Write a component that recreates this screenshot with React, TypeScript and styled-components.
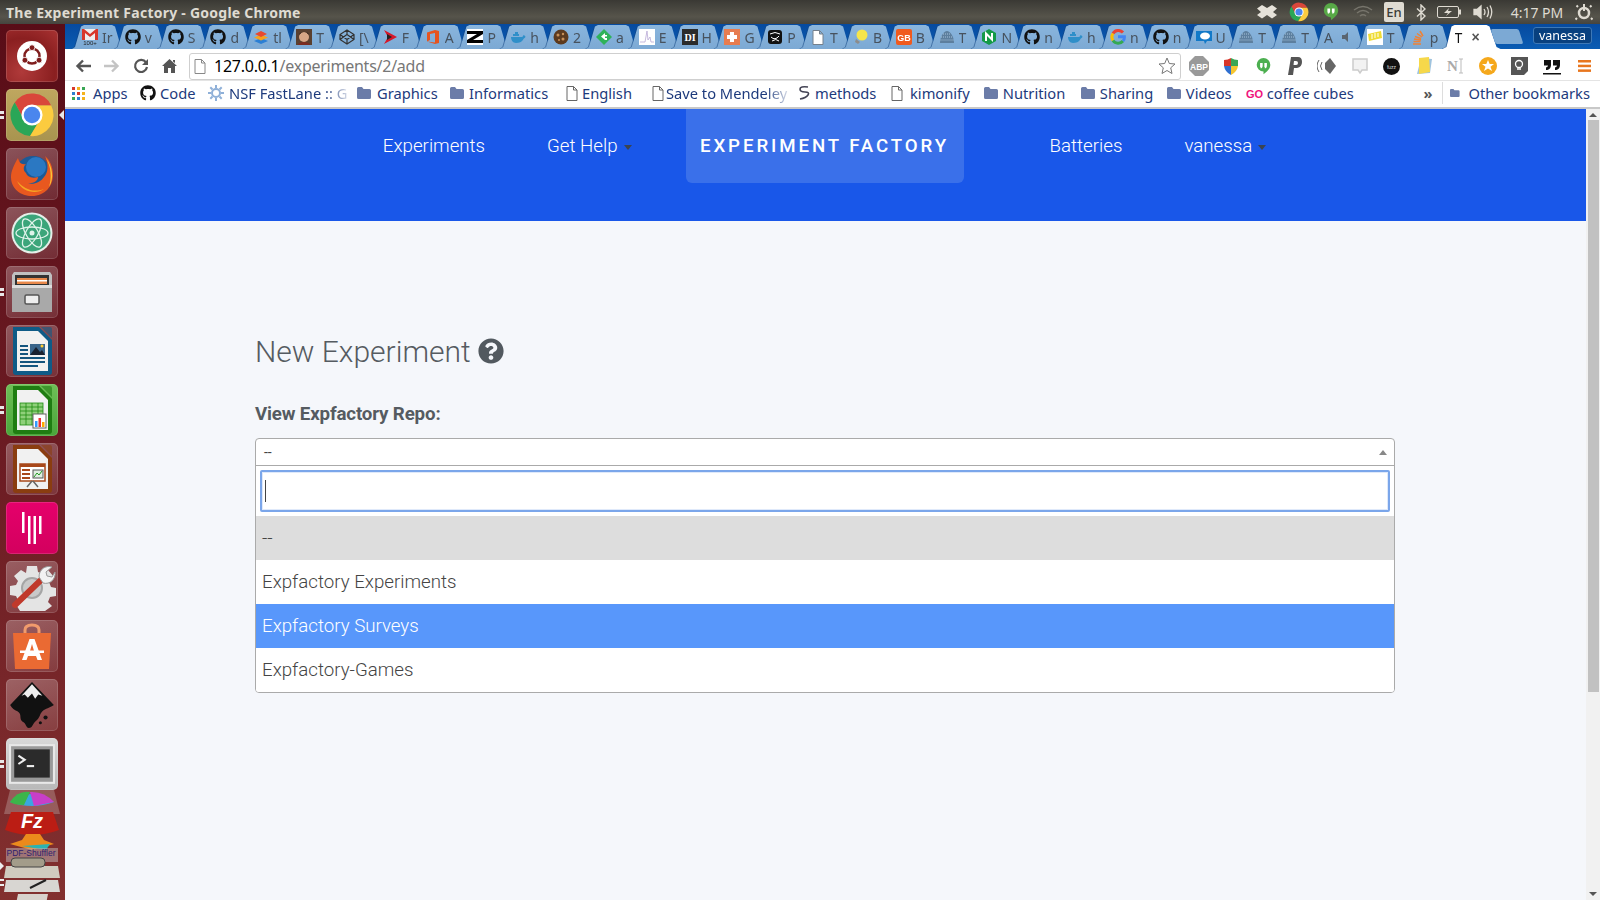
import React from "react";
import styled, { createGlobalStyle } from "styled-components";
import { FaGithub, FaQuestionCircle } from "react-icons/fa";

const Global = createGlobalStyle`
  html, body { margin: 0; padding: 0; height: 100%; overflow: hidden; background: #f5f7fb; }
  #root { height: 100%; }
  * { box-sizing: border-box; }
`;

const Screen = styled.div`
  width: 1600px; height: 900px; overflow: hidden;
  display: flex; flex-direction: column;
  font-family: Roboto, "Liberation Sans", sans-serif;
`;
const TitleBar = styled.header`
  height: 24px; flex: none; display: flex; align-items: center;
  background: linear-gradient(#3a3934, #56544b 70%, #45443e);
  color: #dfdbd2; padding: 0 3px 0 6px;
`;
const TitleText = styled.div`
  font: 700 14px "Noto Sans", "Open Sans", sans-serif; flex: 1; letter-spacing: .25px; white-space: nowrap;
`;
const Indicator = styled.span<{ $w: number }>`
  width: ${p => p.$w}px; flex: none; display: flex; justify-content: center; align-items: center;
  color: #dfdbd2;
`;
const ClockText = styled.span`
  font: 400 14px "Noto Sans", sans-serif; width: 60px; flex: none; text-align: center; color: #dfdbd2; margin-left: 6px; margin-right: 4px;
`;
const LangBox = styled.span`
  background: #dfdbd2; color: #3c3b37; font: 500 13px "Noto Sans", sans-serif; width: 20px; height: 20px;
  display: flex; align-items: center; justify-content: center; border-radius: 2px;
`;
const Body = styled.div`flex: 1; min-height: 0; display: flex;`;
const Launcher = styled.nav`
  width: 65px; flex: none; display: flex; flex-direction: column; gap: 7px; padding-top: 6px;
  background: linear-gradient(#590d17, #6a1a22 45%, #82302f);
  position: relative; overflow: hidden;
`;
const Tile = styled.div<{ $bg?: string }>`
  width: 52px; height: 52px; margin-left: 6px; flex: none; border-radius: 5px; position: relative;
  background: ${p => p.$bg || "linear-gradient(160deg, rgba(255,255,255,.28), rgba(255,255,255,.1))"};
  box-shadow: inset 0 0 0 1px rgba(255,255,255,.14);
  display: flex; align-items: center; justify-content: center;
`;
const Pips = styled.span`
  position: absolute; left: -6px; top: 50%; transform: translateY(-50%);
  display: flex; flex-direction: column; gap: 2px;
  &::before, &::after { content: ""; width: 4px; height: 3px; background: #e8e8e8; }
`;
const Active = styled.span`
  position: absolute; right: -6px; top: 50%; transform: translateY(-50%);
  border: 5px solid transparent; border-left: 0; border-right: 5px solid #e8e8e8;
`;
const Stack = styled.svg`display: block; margin-top: -7px; flex: none;`;
const Main = styled.div`flex: 1; min-width: 0; display: flex; flex-direction: column;`;
const TabStrip = styled.div`
  height: 25px; flex: none; display: flex; align-items: flex-end; padding-left: 7px; position: relative;
  background: linear-gradient(#064a9f, #0a5cb3);
`;
const TabSlot = styled.div`
  width: 42.84px; flex: none; height: 24px; filter: drop-shadow(-1px 0 0 rgba(20,70,130,.55));
`;
const TabShape = styled.div<{ $active?: boolean }>`
  width: ${p => (p.$active ? 58 : 52)}px; height: 24px; display: flex; align-items: center; gap: 4px;
  padding-left: ${p => (p.$active ? 12 : 10)}px; overflow: hidden;
  clip-path: ${p => p.$active
    ? "polygon(0 100%, 4px 92%, 9px 6%, 12px 0, 44px 0, 47px 6%, 54px 92%, 58px 100%)"
    : "polygon(0 100%, 3px 92%, 9px 6%, 12px 0, 40px 0, 43px 6%, 49px 92%, 52px 100%)"};
  background: ${p => (p.$active ? "#fff" : "linear-gradient(#8ab5dd, #7ca9d4)")};
  font: 400 14px "Noto Sans", sans-serif; color: #47525e; white-space: nowrap;
`;
const TabIcon = styled.span`width: 16px; height: 16px; flex: none; display: flex; align-items: center; justify-content: center; color: #111;`;
const TabLabel = styled.span<{ $active?: boolean }>`
  width: ${p => (p.$active ? 10 : 14)}px; overflow: hidden; flex: none; color: ${p => (p.$active ? "#111" : "#47525e")};
`;
const CloseMark = styled.span`color: #555; font: 700 14px "Liberation Sans", sans-serif; margin-left: 3px;`;
const NewTab = styled.div`
  width: 28px; height: 15px; margin-left: 8px; margin-bottom: 5px; flex: none; transform: skewX(18deg);
  background: #7ca9d4; border-radius: 2px;
`;
const Profile = styled.div`
  position: absolute; right: 8px; top: 3px; width: 59px; height: 17px; border-radius: 3px;
  background: #08407f; border: 1px solid #3d78b6; color: #fff; font: 400 12.5px "Noto Sans", sans-serif;
  display: flex; align-items: center; justify-content: center;
`;
const Toolbar = styled.div`
  height: 32px; flex: none; display: flex; align-items: center; background: #fff; border-bottom: 1px solid #e4e4e4;
  padding: 3px 0 0 3px;
`;
const NavBtn = styled.span`width: 29px; flex: none; display: flex; align-items: center; justify-content: center;`;
const Omnibox = styled.div`
  width: 992px; height: 27px; margin-left: 5px; margin-right: 2px; flex: none; display: flex; align-items: center; gap: 8px; padding: 0 4px;
  border: 1px solid #cfcfcf; border-radius: 3px; background: #fff;
`;
const Url = styled.div`flex: 1; font: 400 16px "Noto Sans", sans-serif; color: #777; white-space: nowrap; letter-spacing: -.25px;`;
const Host = styled.span`color: #000;`;
const ExtBtn = styled.span`width: 32.1px; flex: none; display: flex; align-items: center; justify-content: center;`;
const Bookmarks = styled.div`
  height: 28px; flex: none; display: flex; align-items: center; background: #fff; border-bottom: 2px solid #c8c8c8;
  font: 400 14.7px "Noto Sans", sans-serif; color: #1d3a7c; padding: 0 0 2px 7px; white-space: nowrap; overflow: hidden;
`;
const Bookmark = styled.span<{ $w: number; $gap?: number; $fade?: boolean }>`
  width: ${p => p.$w}px; flex: none; display: flex; align-items: center; gap: ${p => p.$gap ?? 7}px; overflow: hidden;
  ${p => p.$fade ? "mask-image: linear-gradient(90deg, #000 78%, transparent 97%);" : ""}
`;
const Chevrons = styled.span`width: 28px; flex: none; color: #555; font-weight: 700; text-align: center;`;
const BarDivider = styled.span`width: 1px; height: 22px; background: #ddd; margin: 0 7px 0 0; flex: none;`;
const Viewport = styled.div`flex: 1; min-height: 0; display: flex; background: #f5f7fb;`;
const Page = styled.main`flex: 1; min-width: 0; display: flex; flex-direction: column;`;
const NavBar = styled.div`
  height: 112px; flex: none; background: #1957e9; display: flex; justify-content: center; align-items: flex-start;
  padding-right: 2px; font: 300 18.7px Roboto, sans-serif; color: #fff;
`;
const NavItem = styled.a<{ $right: number }>`
  height: 74px; display: flex; align-items: center; gap: 6px; margin-right: ${p => p.$right}px; white-space: nowrap;
`;
const Caret = styled.i`
  width: 0; height: 0; border: 4.5px solid transparent; border-bottom: 0; border-top: 5px solid #3b4450; margin-top: 2px;
`;
const Brand = styled.a`
  width: 278px; height: 74px; margin-right: 86px; background: #3a70ea; border-radius: 0 0 6px 6px;
  display: flex; align-items: center; justify-content: center;
  font: 500 18.7px Roboto, sans-serif; letter-spacing: 2.9px; white-space: nowrap;
`;
const Content = styled.section`padding: 104px 191px 0 190px;`;
const Heading = styled.h1`
  margin: 0; display: flex; align-items: center; gap: 7px; height: 52px;
  font: 300 30px Roboto, sans-serif; color: #555b61;
`;
const FieldLabel = styled.label`
  display: block; margin-top: 26px; font: 700 18.7px Roboto, sans-serif; color: #555b61; letter-spacing: -.15px; line-height: 22px;
`;
const SelectBox = styled.div`
  margin-top: 13px; background: #fff; border: 1px solid #aaa; border-radius: 4px; overflow: hidden;
`;
const SelectHead = styled.div`
  height: 27px; padding: 0 7px 0 8px; display: flex; align-items: center; justify-content: space-between;
  border-bottom: 1px solid #aaa; font: 400 14px Roboto, sans-serif; color: #444;
`;
const CaretUp = styled.i`
  width: 0; height: 0; border: 4px solid transparent; border-top: 0; border-bottom: 5px solid #888; margin-right: 0;
`;
const SearchWrap = styled.div`padding: 4px;`;
const SearchBox = styled.div`
  height: 42px; border: 2px solid #7ba6ea; border-radius: 2px; display: flex; align-items: center; padding-left: 3px;
  box-shadow: inset 0 0 0 1px #dfe9fa;
`;
const TextCaret = styled.span`width: 1px; height: 22px; background: #444;`;
const Option = styled.div<{ $state?: "selected" | "hover" }>`
  height: 44px; padding-left: 6px; display: flex; align-items: center;
  font: 300 18.7px Roboto, sans-serif;
  background: ${p => (p.$state === "selected" ? "#ddd" : p.$state === "hover" ? "#5897fb" : "#fff")};
  color: ${p => (p.$state === "hover" ? "#fff" : "#444")};
`;
const Scrollbar = styled.aside`
  width: 14px; flex: none; background: #f1f1f1; display: flex; flex-direction: column; align-items: center;
  padding: 4px 0; justify-content: flex-start;
`;
const ArrowUp = styled.i`width: 0; height: 0; border: 4px solid transparent; border-top: 0; border-bottom: 4px solid #555; flex: none;`;
const ArrowDown = styled.i`width: 0; height: 0; border: 4px solid transparent; border-bottom: 0; border-top: 4px solid #555; flex: none; margin-top: auto;`;
const Thumb = styled.div`width: 11px; height: 572px; margin-top: 3px; background: #c1c1c1; flex: none;`;

/* ---------- small drawings ---------- */
const ChromeLogo = ({ s = 16 }: { s?: number }) => (
  <svg width={s} height={s} viewBox="0 0 48 48">
    <path d="M24 14H44A22 22 0 0 0 6 11L15 28Z" fill="#d9463a" />
    <path d="M6 11A22 22 0 0 0 22 46L31 31 15 28Z" fill="#2aa657" />
    <path d="M44 14A22 22 0 0 1 22 46L33 28 24 14Z" fill="#fbcb3f" />
    <circle cx="24" cy="24" r="11" fill="#fff" />
    <circle cx="24" cy="24" r="8.6" fill="#4a86ee" />
  </svg>
);
const Folder = () => (
  <svg width="14" height="12" viewBox="0 0 14 12"><path d="M0 1.5Q0 0 1.5 0H5L6.5 2H12.5Q14 2 14 3.5V10.5Q14 12 12.5 12H1.5Q0 12 0 10.5Z" fill="#6b7ca8" /></svg>
);
const Doc = ({ c = "#666" }: { c?: string }) => (
  <svg width="12" height="15" viewBox="0 0 12 15"><path d="M1 .5H7.5L11 4V14.5H1ZM7.5 .5V4H11" fill="#fff" stroke={c} /></svg>
);
const Hangouts = ({ c = "#4caf50", s = 18 }: { c?: string; s?: number }) => (
  <svg width={s} height={s} viewBox="0 0 18 20">
    <path d="M9 0A8 8 0 0 1 17 8C17 13 13 16 9 19V16A8 8 0 0 1 9 0Z" fill={c} />
    <path d="M5 6H8V9C8 11 7 12 5.5 12V10.5H5ZM10 6H13V9C13 11 12 12 10.5 12V10.5H10Z" fill="#fff" />
  </svg>
);
const Pile = () => (
  <svg width="16" height="16" viewBox="0 0 16 16">
    <path d="M1 14C1 7 5 2 8 2S15 7 15 14Z" fill="#5d7f9e" />
    <path d="M2 8H14M1.5 11H14.5M4 5H12" stroke="#a8c4dc" strokeDasharray="1 1" />
  </svg>
);
const favicons: Record<string, React.ReactNode> = {
  gmail: (
    <svg width="16" height="16" viewBox="0 0 16 16">
      <rect y="0" width="16" height="11" fill="#eee" />
      <path d="M0 0H2L8 5 14 0H16V11H13V4L8 8 3 4V11H0Z" fill="#d8372b" />
      <text x="8" y="16" fontSize="6" textAnchor="middle" fontFamily="Liberation Sans" fill="#222">100+</text>
    </svg>
  ),
  gh: <FaGithub size={16} />,
  stack: (
    <svg width="16" height="16" viewBox="0 0 16 16">
      <path d="M8 9 1 12 8 15 15 12Z" fill="#2b7fd4" /><path d="M8 5.500 1 8.500 8 11.500 15 8.500Z" fill="#f6a21e" />
      <path d="M8 2 2 5 8 8 14 5Z" fill="#e8492f" />
    </svg>
  ),
  face: (
    <svg width="16" height="16" viewBox="0 0 16 16">
      <rect width="16" height="16" fill="#5a4030" /><circle cx="8" cy="8" r="5" fill="#d8a686" />
      <path d="M2 16C2 12 14 12 14 16Z" fill="#7a2c22" /><path d="M3 6Q8 0 13 6L12 4Q8 2 4 4Z" fill="#2a1a12" />
    </svg>
  ),
  codepen: (
    <svg width="16" height="16" viewBox="0 0 16 16" fill="none" stroke="#333" strokeWidth="1.2">
      <path d="M8 1 15 5.500V10.500L8 15 1 10.500V5.500ZM8 1V5.500M8 10.500V15M1 5.500 8 10.500 15 5.500M1 10.500 8 5.500 15 10.500" />
    </svg>
  ),
  red: <svg width="16" height="16" viewBox="0 0 16 16"><path d="M2 1 15 8 2 15 6 8Z" fill="#d6182a" /><path d="M5 5 10 8 5 11Z" fill="#222" /></svg>,
  office: <svg width="16" height="16" viewBox="0 0 16 16"><path d="M2 3.500 10 1 14 2V14L10 15 2 12.500 10 13.500V4L5 5V11L2 12.500Z" fill="#e6541f" /></svg>,
  z: <svg width="16" height="16" viewBox="0 0 16 16"><rect width="16" height="16" fill="#fff" /><path d="M0 2H16V5L6 11H16V14H0V11L10 5H0Z" fill="#000" /></svg>,
  docker: (
    <svg width="16" height="16" viewBox="0 0 16 16"><path d="M1 8H12C13 8 13 6 14 6 15 7 15.500 7.500 15.500 8 14.500 9 14 9.500 13.500 10 12 13 9 14 6 14 3 14 1 11 1 8Z" fill="#2f8fc9" /><path d="M3 7V5H9V7M5 5V3H8V5" fill="#2f8fc9" /></svg>
  ),
  cookie: <svg width="16" height="16" viewBox="0 0 16 16"><circle cx="8" cy="8" r="7.500" fill="#5c3a1e" /><circle cx="5" cy="6" r="1.500" fill="#c89058" /><circle cx="10" cy="5" r="1.200" fill="#c89058" /><circle cx="10" cy="10" r="1.500" fill="#c89058" /><circle cx="6" cy="11" r="1" fill="#c89058" /></svg>,
  diamond: <svg width="16" height="16" viewBox="0 0 16 16"><path d="M8 0 16 8 8 16 0 8Z" fill="#2eb25a" /><path d="M5 7.500 9 4V6H11V7.500H9V9H11V11H9Z" fill="#fff" /></svg>,
  chart: <svg width="16" height="16" viewBox="0 0 16 16"><rect width="16" height="16" fill="#fff" /><path d="M1 13H6L8 2 9 11 11 8 12 13H15" fill="none" stroke="#b9a9d6" strokeWidth=".8" /></svg>,
  di: (
    <svg width="16" height="16" viewBox="0 0 16 16"><rect width="16" height="16" fill="#2b2b2b" /><text x="8" y="12" fontSize="10" fontWeight="700" fontFamily="Liberation Serif" textAnchor="middle" fill="#fff">DI</text></svg>
  ),
  plus: <svg width="16" height="16" viewBox="0 0 16 16"><rect width="16" height="16" fill="#e77c50" /><path d="M6 3H10V6H13V10H10V13H6V10H3V6H6Z" fill="#fff" /></svg>,
  dark: (
    <svg width="16" height="16" viewBox="0 0 16 16"><rect x="1" y="1" width="14" height="14" rx="3" fill="#111" /><path d="M3 5Q8 2 13 5M4 8Q8 12 12 7M5 12Q9 9 12 12" stroke="#fff" fill="none" /></svg>
  ),
  doc: <Doc c="#75808c" />,
  bulb: <svg width="16" height="16" viewBox="0 0 16 16"><circle cx="9" cy="6" r="5.500" fill="#f5e54a" /><path d="M3 10 7 13 5 15 2 13Z" fill="#8c8c8c" /></svg>,
  gb: (
    <svg width="16" height="16" viewBox="0 0 16 16"><rect width="16" height="16" rx="2" fill="#f05a1e" /><text x="8" y="12" fontSize="9" fontWeight="700" fontFamily="Liberation Sans" textAnchor="middle" fill="#fff">GB</text></svg>
  ),
  pile: <Pile />,
  nginx: <svg width="16" height="16" viewBox="0 0 16 16"><path d="M8 0 15 4V12L8 16 1 12V4Z" fill="#149a46" /><path d="M5 12V4.500L11 10.500V4" stroke="#fff" strokeWidth="2" fill="none" /></svg>,
  g: (
    <svg width="16" height="16" viewBox="0 0 16 16" fill="none" strokeWidth="3">
      <path d="M13 3.500A6.300 6.300 0 0 0 3 4.500" stroke="#ea4335" /><path d="M3 4.500A6.300 6.300 0 0 0 3 11.500" stroke="#fbbc05" />
      <path d="M3 11.500A6.300 6.300 0 0 0 13 12" stroke="#34a853" /><path d="M13 12Q14.500 10.500 14.400 7.800H8" stroke="#4285f4" />
    </svg>
  ),
  blue: <svg width="16" height="16" viewBox="0 0 16 16"><path d="M0 2H16V12H11L9 15 8 12H0Z" fill="#1279c8" /><ellipse cx="9" cy="7" rx="5" ry="3.500" fill="#fff" /></svg>,
  yellow: <svg width="16" height="16" viewBox="0 0 16 16"><rect width="16" height="16" fill="#fff" /><path d="M1 5 14 2 15 9 2 12Z" fill="#efdc34" /><path d="M5 5V10M8 4V9M11 4V8" stroke="#fff" /></svg>,
  so: <svg width="16" height="16" viewBox="0 0 16 16" fill="none" stroke="#ef8236" strokeWidth="1.500"><path d="M3 15H11M3.500 12.500H10.500M4 10 11 11M5 7.500 11 9.500M7 4.500 12 8M10 2 13 7" /></svg>,
};
const tabs: [string | null, string][] = [
  ["gmail", "Ir"], ["gh", "v"], ["gh", "S"], ["gh", "d"], ["stack", "tl"], ["face", "T"], ["codepen", "[\\"], ["red", "F"],
  ["office", "A"], ["z", "P"], ["docker", "h"], ["cookie", "2"], ["diamond", "a"], ["chart", "E"], ["di", "H"], ["plus", "G"],
  ["dark", "P"], ["doc", "T"], ["bulb", "B"], ["gb", "B"], ["pile", "T"], ["nginx", "N"], ["gh", "n"], ["docker", "h"],
  ["g", "n"], ["gh", "n"], ["blue", "U"], ["pile", "T"], ["pile", "T"], [null, "A"], ["yellow", "T"], ["so", "p"],
];

const LibreDoc = ({ edge, children }: { edge: string; children: React.ReactNode }) => (
  <svg width="42" height="50" viewBox="0 0 42 50">
    <path d="M2 1H28L41 14V46Q41 49 38 49H5Q2 49 2 46Z" fill={edge} />
    <path d="M30 1 41 12V3Q41 1 39 1Z" fill={edge} opacity=".6" />
    <path d="M6 5H27L37 15V45H6Z" fill="#f1f1f1" />
    {children}
  </svg>
);

const launcher: { node: React.ReactNode; bg?: string; pips?: boolean; active?: boolean }[] = [
  {
    bg: "radial-gradient(circle at 30% 80%, #b03a3a, #8a1f20 60%, #a33)",
    node: (
      <svg width="30" height="30" viewBox="0 0 36 36">
        <circle cx="18" cy="18" r="18" fill="#fff" />
        <circle cx="18" cy="18" r="9" fill="none" stroke="#7f1d1d" strokeWidth="3" />
        <circle cx="18" cy="8" r="3.500" fill="#7f1d1d" stroke="#fff" /><circle cx="9.500" cy="23" r="3.500" fill="#7f1d1d" stroke="#fff" /><circle cx="26.500" cy="23" r="3.500" fill="#7f1d1d" stroke="#fff" />
      </svg>
    ),
  },
  { bg: "linear-gradient(#bfa75f, #a8944f)", node: <ChromeLogo s={46} />, pips: true, active: true },
  {
    node: (
      <svg width="46" height="46" viewBox="0 0 46 46">
        <circle cx="24" cy="23" r="18" fill="#1d5a96" />
        <circle cx="27" cy="16" r="10" fill="#2b78c2" />
        <path d="M9 7C5 14 2 20 2 26 2 38 12 45 23 45 36 45 44 35 44 24 44 16 41 9 36 5 40 14 39 22 35 26 31 32 24 34 18 32 24 33 29 30 29 26 22 28 18 25 17 22 14 20 14 15 17 13 12 14 10 11 9 7Z" fill="#e8581f" />
        <path d="M37 7C44 16 45 28 40 36 43 26 42 16 37 7Z" fill="#f7c63a" />
        <path d="M8 30C13 41 27 44 35 38 24 42 15 38 8 30Z" fill="#f5a524" />
      </svg>
    ),
  },
  {
    node: (
      <svg width="42" height="42" viewBox="0 0 42 42">
        <circle cx="21" cy="21" r="20.500" fill="#e5efe9" />
        <circle cx="21" cy="21" r="18.500" fill="#3ba57a" />
        <g fill="none" stroke="#dff3ea" strokeWidth="1.300">
          <ellipse cx="21" cy="21" rx="16" ry="6" /><ellipse cx="21" cy="21" rx="16" ry="6" transform="rotate(60 21 21)" /><ellipse cx="21" cy="21" rx="16" ry="6" transform="rotate(120 21 21)" />
        </g>
        <circle cx="21" cy="21" r="2.500" fill="#dff3ea" />
      </svg>
    ),
  },
  {
    pips: true,
    node: (
      <svg width="42" height="44" viewBox="0 0 42 44">
        <path d="M3 2H39L41 5V42H1V5Z" fill="#c0c0c0" />
        <rect x="4" y="5" width="34" height="12" fill="#333" />
        <rect x="6" y="8" width="30" height="6" fill="#e8884a" /><rect x="6" y="10" width="30" height="1.500" fill="#fff" />
        <path d="M1 17H41V42H1Z" fill="#a9a9a9" /><rect x="1" y="15" width="40" height="3" fill="#ddd" />
        <rect x="14" y="25" width="14" height="9" rx="1.500" fill="#eee" stroke="#555" strokeWidth="1.500" />
      </svg>
    ),
  },
  {
    node: (
      <LibreDoc edge="#0f5b87">
        <g fill="#14557e">
          <rect x="9" y="19" width="8" height="2" /><rect x="9" y="23" width="8" height="2" /><rect x="9" y="27" width="8" height="2" />
          <rect x="9" y="31" width="25" height="2" /><rect x="9" y="35" width="25" height="2" /><rect x="9" y="39" width="18" height="2" />
        </g>
        <rect x="19" y="18" width="15" height="11" fill="#39658a" /><path d="M19 29 25 21 29 26 31 24 34 29Z" fill="#1a2230" /><circle cx="31" cy="20" r="1.500" fill="#fc3" />
      </LibreDoc>
    ),
    bg: undefined,
  },
  {
    bg: "linear-gradient(#6fbf57, #4aa63a)",
    pips: true,
    node: (
      <LibreDoc edge="#1f7d12">
        <g fill="#8fd07a" stroke="#1c8a10" strokeWidth=".8"><rect x="9" y="18" width="23" height="22" /></g>
        <path d="M9 22H32M9 26H32M9 30H32M9 34H32M15 18V40M21 18V40M27 18V40" stroke="#1c8a10" strokeWidth=".8" />
        <rect x="22" y="29" width="13" height="14" fill="#fff" stroke="#666" /><rect x="24" y="36" width="2.500" height="6" fill="#39f" /><rect x="27.500" y="33" width="2.500" height="9" fill="#e33" /><rect x="31" y="37" width="2.500" height="5" fill="#fa0" />
      </LibreDoc>
    ),
  },
  {
    node: (
      <LibreDoc edge="#8a3d10">
        <rect x="9" y="20" width="25" height="17" fill="#fff" stroke="#a8481a" strokeWidth="1.500" />
        <rect x="9" y="20" width="25" height="3" fill="#a8481a" />
        <g fill="#a8481a"><rect x="11" y="25" width="8" height="2" /><rect x="11" y="29" width="8" height="2" /><rect x="11" y="33" width="8" height="2" /></g>
        <rect x="22" y="26" width="10" height="8" fill="#dfeee0" stroke="#555" /><path d="M23 33 26 29 28 31 31 27" stroke="#292" fill="none" />
        <path d="M21 37 16 43M22 37 27 43" stroke="#666" strokeWidth="1.500" />
      </LibreDoc>
    ),
  },
  {
    bg: "linear-gradient(#e5006b, #d3005e)",
    node: (
      <svg width="20" height="32" viewBox="0 0 20 32" fill="#fff">
        <rect x="0" y="0" width="2.500" height="21" /><rect x="6" y="4" width="2.500" height="28" /><rect x="11.500" y="4" width="2.500" height="28" /><rect x="17" y="4" width="2.500" height="18" />
      </svg>
    ),
  },
  {
    node: (
      <svg width="48" height="48" viewBox="0 0 48 48">
        <path d="M19 3H29L30 9 35 11 40 7 46 14 41 19 43 24 48 25V33L42 34 40 39 44 43 37 48H12L7 40 10 37 8 33 2 32V23L8 22 10 18 6 13 13 7 18 10Z" fill="#e4e4e4" />
        <circle cx="24" cy="25" r="10" fill="#c9c9c9" stroke="#a5a5a5" strokeWidth="2" />
        <path d="M7 42 33 17" stroke="#c0392b" strokeWidth="6" strokeLinecap="round" />
        <path d="M31 14C31 6 38 2 44 4L38 9 39 13 44 14 47 9C48 16 42 22 35 20Z" fill="#f2f2f2" stroke="#999" />
      </svg>
    ),
  },
  {
    node: (
      <svg width="40" height="46" viewBox="0 0 40 46">
        <path d="M13 12V7Q13 2 20 2T27 7V12" fill="none" stroke="#f19b6c" strokeWidth="3" />
        <path d="M1 10H39L37 46H3Z" fill="#ea6a33" />
        <path d="M17.500 16H22.500L30 37H25.500L24 33H16L14.500 37H10ZM20 21 18 28H22Z" fill="#fff" fillRule="evenodd" />
        <rect x="8" y="27.500" width="24" height="2.500" fill="#fff" />
      </svg>
    ),
  },
  {
    node: (
      <svg width="48" height="50" viewBox="0 0 46 48">
        <path d="M23 2 44 24C40 27 36 27 33 30 30 33 31 36 27 39 23 42 24 46 20 46 17 46 18 42 14 40 10 37 14 33 9 30 6 29 4 27 2 24Z" fill="#111" />
        <path d="M23 4 33 15 29 14 26 18 23 13 19 17 16 14 13 15Z" fill="#eee" />
        <circle cx="36" cy="36" r="2" fill="#111" /><circle cx="31" cy="41" r="1.500" fill="#111" />
      </svg>
    ),
  },
];

export default function App() {
  return (
    <Screen>
      <Global />
      <TitleBar>
        <TitleText>The Experiment Factory - Google Chrome</TitleText>
        <Indicator $w={32}>
          <svg width="20" height="16" viewBox="0 0 20 16" fill="#e6e2d9"><path d="M5 1 10 4 15 1 20 4.500 16 8 20 11 15 14.500 10 11 5 14.500 0 11 4 8 0 4.500Z" /></svg>
        </Indicator>
        <Indicator $w={32}><ChromeLogo s={20} /></Indicator>
        <Indicator $w={32}><Hangouts s={18} c="#58a947" /></Indicator>
        <Indicator $w={32}>
          <svg width="20" height="14" viewBox="0 0 20 14" fill="none" stroke="#77756c" strokeWidth="1.500"><path d="M1 5Q10-2 19 5M4 8Q10 3 16 8M7 11Q10 8.500 13 11" /></svg>
        </Indicator>
        <Indicator $w={30}><LangBox>En</LangBox></Indicator>
        <Indicator $w={23}>
          <svg width="10" height="17" viewBox="0 0 10 17" fill="none" stroke="#dfdbd2" strokeWidth="1.400"><path d="M1 4.500 9 12 5 16V1L9 5 1 12.500" /></svg>
        </Indicator>
        <Indicator $w={33}>
          <svg width="24" height="12" viewBox="0 0 24 12"><rect x=".5" y=".5" width="21" height="11" rx="1.500" fill="#4a4942" stroke="#dfdbd2" /><rect x="22" y="3.500" width="2" height="5" fill="#dfdbd2" /><path d="M12 2 7 7H11L9 10 15 5H11Z" fill="#dfdbd2" /></svg>
        </Indicator>
        <Indicator $w={36}>
          <svg width="20" height="16" viewBox="0 0 20 16" fill="none" stroke="#dfdbd2" strokeWidth="1.300"><path d="M1 5.500H4L8 2V14L4 10.500H1Z" fill="#dfdbd2" /><path d="M11 5Q13 8 11 11M14 3Q17 8 14 13M17 1.500Q20.500 8 17 14.500" /></svg>
        </Indicator>
        <ClockText>4:17 PM</ClockText>
        <Indicator $w={26}>
          <svg width="18" height="18" viewBox="0 0 18 18" fill="none" stroke="#dfdbd2"><circle cx="9" cy="10" r="5" strokeWidth="2.500" /><path d="M9 1V8" strokeWidth="2" /><path d="M3 4 1.500 2.500M15 4 16.500 2.500M2 15 .5 16.500M16 15 17.500 16.500" strokeWidth="2" /></svg>
        </Indicator>
      </TitleBar>
      <Body>
        <Launcher>
          {launcher.map((t, i) => (
            <Tile key={i} $bg={t.bg}>
              {t.pips && <Pips />}
              {t.active && <Active />}
              {t.node}
            </Tile>
          ))}
          <Tile $bg="linear-gradient(#d8d8d8, #b8b8b8)">
            <Pips />
            <svg width="46" height="40" viewBox="0 0 44 38">
              <rect x="1" y="1" width="42" height="36" fill="#999" stroke="#e8e8e8" strokeWidth="2" />
              <rect x="5" y="5" width="34" height="27" fill="#2b2b2b" />
              <path d="M9 11 15 15 9 19" fill="none" stroke="#eee" strokeWidth="2" /><rect x="17" y="20" width="7" height="2" fill="#eee" />
            </svg>
          </Tile>
          <Stack width="64" height="114" viewBox="0 0 64 114">
            <path d="M10 0H54L60 24H4Z" fill="#c9b8b4" opacity=".35" />
            <path d="M10 12Q30-4 54 12 32 20 10 12Z" fill="#3aa6e0" />
            <path d="M10 12Q18 0 30 2L24 15Q14 15 10 12Z" fill="#3cb54a" /><path d="M30 2 34 16 54 12Q44 1 30 2Z" fill="#c83fc8" />
            <path d="M11 22H53L59 40Q32 50 5 40Z" fill="#bb1d14" />
            <text x="32" y="38" fontFamily="Liberation Sans" fontStyle="italic" fontWeight="700" fontSize="20" textAnchor="middle" fill="#fff">Fz</text>
            <path d="M26 44H40L44 50 54 54 32 60 10 54 22 50Z" fill="#ec8a1c" /><path d="M22 56 50 54 46 60Z" fill="#2bb3b3" />
            <rect x="6" y="58" width="52" height="14" fill="#b9aeb0" opacity=".55" />
            <text x="31" y="66" fontFamily="Liberation Sans" fontSize="8.500" textAnchor="middle" fill="#2e1f6e">PDF-Shuffler</text>
            <path d="M6 76H58L60 88H4Z" fill="#d0cbbf" /><rect x="11" y="68" width="34" height="9" rx="4" fill="#a39c8a" stroke="#444" />
            <path d="M6 90H58L60 102H4Z" fill="#d8d6d2" /><path d="M30 98 46 90" stroke="#222" strokeWidth="2" />
            <path d="M18 104H48L46 114H16Z" fill="#d8d2cc" />
            <path d="M0 72 4 76 0 80ZM0 94H4V96H0ZM0 89H4V91H0Z" fill="#eee" />
          </Stack>
        </Launcher>
        <Main>
          <TabStrip>
            {tabs.map(([icon, label], i) => (
              <TabSlot key={i}>
                <TabShape>
                  {icon ? <TabIcon>{favicons[icon]}</TabIcon> : null}
                  <TabLabel>{label}</TabLabel>
                  {icon ? null : (
                    <svg width="10" height="12" viewBox="0 0 10 12" fill="#5a6570"><path d="M0 4H3L6 1V11L3 8H0Z" /></svg>
                  )}
                </TabShape>
              </TabSlot>
            ))}
            <TabSlot>
              <TabShape $active>
                <TabLabel $active>T</TabLabel>
                <CloseMark>×</CloseMark>
              </TabShape>
            </TabSlot>
            <NewTab />
            <Profile>vanessa</Profile>
          </TabStrip>
          <Toolbar>
            <NavBtn>
              <svg width="16" height="14" viewBox="0 0 16 14" fill="none" stroke="#555" strokeWidth="2.400"><path d="M16 7H3M8 1.500 2.500 7 8 12.500" /></svg>
            </NavBtn>
            <NavBtn>
              <svg width="16" height="14" viewBox="0 0 16 14" fill="none" stroke="#c4c4c4" strokeWidth="2.400"><path d="M0 7H13M8 1.500 13.500 7 8 12.500" /></svg>
            </NavBtn>
            <NavBtn>
              <svg width="16" height="16" viewBox="0 0 16 16" fill="none" stroke="#555" strokeWidth="2.200"><path d="M13 4.500A6 6 0 1 0 14 9" /><path d="M15 1V7H9Z" fill="#555" stroke="none" /></svg>
            </NavBtn>
            <NavBtn>
              <svg width="15" height="14" viewBox="0 0 15 14" fill="#555"><path d="M7.500 0 15 7H13V14H9V9H6V14H2V7H0ZM11 1H13V4L11 2.500Z" /></svg>
            </NavBtn>
            <Omnibox>
              <Doc c="#888" />
              <Url><Host>127.0.0.1</Host>/experiments/2/add</Url>
              <svg width="18" height="18" viewBox="0 0 18 18" fill="#fff" stroke="#777"><path d="M9 1 11.300 6.500 17 7 12.700 10.800 14 16.500 9 13.500 4 16.500 5.300 10.800 1 7 6.700 6.500Z" /></svg>
            </Omnibox>
            <ExtBtn>
              <svg width="20" height="20" viewBox="0 0 20 20"><path d="M6 0H14L20 6V14L14 20H6L0 14V6Z" fill="#999" /><text x="10" y="13.500" fontSize="8.500" fontWeight="700" fontFamily="Liberation Sans" textAnchor="middle" fill="#fff">ABP</text></svg>
            </ExtBtn>
            <ExtBtn>
              <svg width="14" height="17" viewBox="0 0 14 17"><path d="M0 2Q4 2 7 0V8H0Z" fill="#d8362a" /><path d="M7 0Q10 2 14 2V8H7Z" fill="#3aa655" /><path d="M0 8H7V17Q1 14 0 8Z" fill="#2f6fd0" /><path d="M7 8H14Q13 14 7 17Z" fill="#f5c52f" /></svg>
            </ExtBtn>
            <ExtBtn><Hangouts s={17} /></ExtBtn>
            <ExtBtn>
              <svg width="14" height="18" viewBox="0 0 14 18" fill="#555"><path d="M3 0H10Q14 0 14 5T9 11H6L5 18H0Z" /><path d="M6 4 5.500 8H8Q10 8 10 6T8 4Z" fill="#fff" /></svg>
            </ExtBtn>
            <ExtBtn>
              <svg width="20" height="18" viewBox="0 0 20 18" fill="#666"><path d="M8 6 13 1 19 9 13 17 8 12Z" /><path d="M5 5Q2 9 5 13M2 3Q-2 9 2 15" fill="none" stroke="#666" /></svg>
            </ExtBtn>
            <ExtBtn>
              <svg width="18" height="18" viewBox="0 0 18 18" fill="#f2f2f2" stroke="#ccc" strokeWidth="1.500"><path d="M2 2H16V13H11L9 16 7 13H2Z" /></svg>
            </ExtBtn>
            <ExtBtn>
              <svg width="17" height="17" viewBox="0 0 17 17"><circle cx="8.500" cy="8.500" r="8.500" fill="#111" /><text x="8.500" y="10.500" fontSize="5" textAnchor="middle" fontFamily="Liberation Sans" fill="#ddd">fuzz</text></svg>
            </ExtBtn>
            <ExtBtn>
              <svg width="16" height="18" viewBox="0 0 16 18"><path d="M5 1 16 2 14 16 1 17Z" fill="#9fc3de" /><path d="M3 1 13 0 14 15 3 17Z" fill="#f6d84a" /></svg>
            </ExtBtn>
            <ExtBtn>
              <svg width="18" height="16" viewBox="0 0 18 16"><text x="0" y="13" fontFamily="Liberation Serif" fontWeight="700" fontSize="15" fill="#aaa">N</text><path d="M14 1V15M12 1H16M12 15H16" stroke="#bbb" /></svg>
            </ExtBtn>
            <ExtBtn>
              <svg width="18" height="18" viewBox="0 0 18 18"><circle cx="9" cy="9" r="9" fill="#f5a81c" /><path d="M9 3 10.700 7H15L11.500 9.800 13 14 9 11.500 5 14 6.500 9.800 3 7H7.300Z" fill="#fff" /></svg>
            </ExtBtn>
            <ExtBtn>
              <svg width="17" height="18" viewBox="0 0 17 18"><path d="M0 0H17V14L13 18H0Z" fill="#555" /><circle cx="8" cy="7" r="3.500" fill="none" stroke="#fff" strokeWidth="1.300" /><path d="M6 12H10" stroke="#fff" strokeWidth="1.500" /></svg>
            </ExtBtn>
            <ExtBtn>
              <svg width="18" height="17" viewBox="0 0 18 17" fill="#111"><path d="M1 2H8V7C8 10 6 12 3 12V9.500Q5 9 5 7.500H1ZM10 2H17V7C17 10 15 12 12 12V9.500Q14 9 14 7.500H10Z" /><rect y="15" width="18" height="1.500" /></svg>
            </ExtBtn>
            <ExtBtn>
              <svg width="13" height="12" viewBox="0 0 13 12" fill="#e8761e"><rect width="13" height="2.500" /><rect y="4.700" width="13" height="2.500" /><rect y="9.400" width="13" height="2.500" /></svg>
            </ExtBtn>
          </Toolbar>
          <Bookmarks>
            <Bookmark $w={68} $gap={8}>
              <svg width="13" height="13" viewBox="0 0 13 13">
                {[0, 1, 2].map(r => [0, 1, 2].map(c => (
                  <rect key={`${r}${c}`} x={c * 5} y={r * 5} width="3" height="3" fill={["#d8382b", "#f5b21c", "#3aa655", "#2f7fd0", "#d8382b", "#f5b21c", "#3aa655", "#2f7fd0", "#f5b21c"][r * 3 + c]} />
                )))}
              </svg>
              Apps
            </Bookmark>
            <Bookmark $w={68} $gap={4}><FaGithub size={16} color="#111" />Code</Bookmark>
            <Bookmark $w={149} $gap={5} $fade>
              <svg width="16" height="16" viewBox="0 0 16 16" fill="none" stroke="#8fb0d8" strokeWidth="2"><circle cx="8" cy="8" r="4" /><path d="M8 0V3M8 13V16M0 8H3M13 8H16M2.300 2.300 4.500 4.500M11.500 11.500 13.700 13.700M13.700 2.300 11.500 4.500M2.300 13.700 4.500 11.500" /></svg>
              NSF FastLane :: G
            </Bookmark>
            <Bookmark $w={93} $gap={6}><Folder />Graphics</Bookmark>
            <Bookmark $w={116} $gap={5}><Folder />Informatics</Bookmark>
            <Bookmark $w={86} $gap={4}><Doc />English</Bookmark>
            <Bookmark $w={145} $gap={2} $fade><Doc />Save to Mendeley</Bookmark>
            <Bookmark $w={94} $gap={4}>
              <svg width="14" height="16" viewBox="0 0 14 16" fill="none" stroke="#445" strokeWidth="1.600"><path d="M11 2Q3 1 3 4T8 7 11 10 3 14" /></svg>
              methods
            </Bookmark>
            <Bookmark $w={93} $gap={7}><Doc />kimonify</Bookmark>
            <Bookmark $w={97} $gap={1}><Folder />&nbsp;Nutrition</Bookmark>
            <Bookmark $w={86} $gap={1}><Folder />&nbsp;Sharing</Bookmark>
            <Bookmark $w={79} $gap={1}><Folder />&nbsp;Videos</Bookmark>
            <Bookmark $w={168} $gap={0}>
              <svg width="17" height="12" viewBox="0 0 17 12"><text x="0" y="10.500" fontFamily="Liberation Sans" fontWeight="700" fontSize="11" fill="#f0147c">GO</text></svg>
              &nbsp;coffee cubes
            </Bookmark>
            <Chevrons>»</Chevrons>
            <BarDivider />
            <Bookmark $w={140} $gap={5}><Folder />&nbsp;Other bookmarks</Bookmark>
          </Bookmarks>
          <Viewport>
            <Page>
              <NavBar>
                <NavItem $right={62}>Experiments</NavItem>
                <NavItem $right={54}>Get Help <Caret /></NavItem>
                <Brand>EXPERIMENT FACTORY</Brand>
                <NavItem $right={62}>Batteries</NavItem>
                <NavItem $right={0}>vanessa <Caret /></NavItem>
              </NavBar>
              <Content>
                <Heading>New Experiment <FaQuestionCircle size={26} color="#52595f" /></Heading>
                <FieldLabel>View Expfactory Repo:</FieldLabel>
                <SelectBox>
                  <SelectHead>--<CaretUp /></SelectHead>
                  <SearchWrap><SearchBox><TextCaret /></SearchBox></SearchWrap>
                  <Option $state="selected">--</Option>
                  <Option>Expfactory Experiments</Option>
                  <Option $state="hover">Expfactory Surveys</Option>
                  <Option>Expfactory-Games</Option>
                </SelectBox>
              </Content>
            </Page>
            <Scrollbar>
              <ArrowUp />
              <Thumb />
              <ArrowDown />
            </Scrollbar>
          </Viewport>
        </Main>
      </Body>
    </Screen>
  );
}
